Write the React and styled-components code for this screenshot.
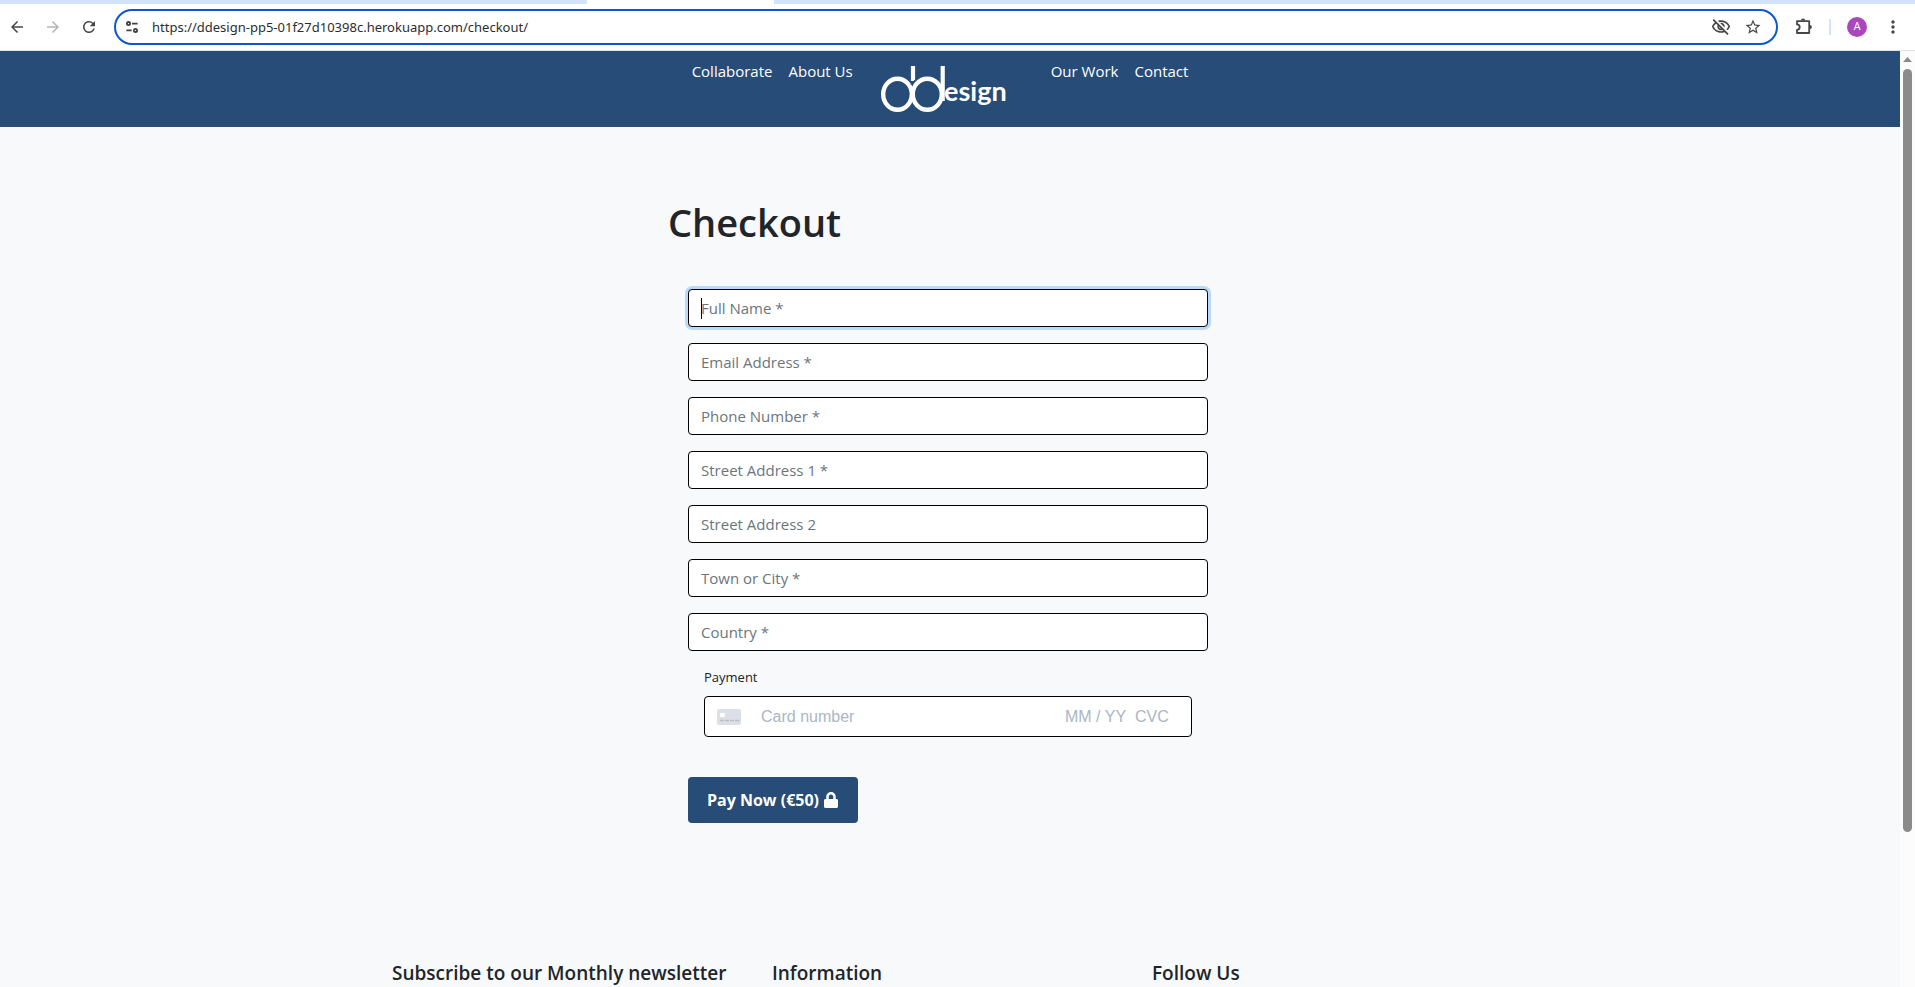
import React from "react";
import styled, { createGlobalStyle, css } from "styled-components";
import { MdArrowBack, MdArrowForward, MdRefresh, MdStarBorder, MdMoreVert, MdOutlineVisibilityOff } from "react-icons/md";
import { FaLock } from "react-icons/fa";

const navy = "#274c77";
const ink = "#212529";

const GlobalStyle = createGlobalStyle`
  *, *::before, *::after { box-sizing: border-box; }
  body {
    margin: 0;
    overflow: hidden;
    background: #f8f9fb;
    color: ${ink};
    font: 400 15px/24px "Open Sans", "Noto Sans", sans-serif;
  }
  svg { display: block; flex: none; }
`;

const Shell = styled.div`
  display: flex;
  flex-direction: column;
  height: 100vh;
`;

/* browser chrome */
const TabStrip = styled.div`
  display: flex;
  height: 4px;
  background: #d3e3fd;
`;
const ActiveTab = styled.div`
  width: 187px;
  margin-left: 587px;
  background: #fff;
`;
const Toolbar = styled.header`
  display: flex;
  align-items: center;
  height: 47px;
  padding: 0 13px 0 8px;
  background: #fff;
  border-bottom: 1px solid #dfe2e0;
`;
const ToolButton = styled.button`
  display: flex;
  align-items: center;
  justify-content: center;
  width: ${(p) => p.$w || 36}px;
  height: 28px;
  padding: 0;
  border: 0;
  background: none;
  color: ${(p) => (p.$muted ? "#b4b5b6" : "#474747")};
`;
const NavButtons = styled.div`
  display: flex;
  gap: 18px;
  margin-right: 16px;
`;
const AddressBar = styled.div`
  display: flex;
  flex: 1;
  align-items: center;
  height: 36px;
  padding: 0 7px;
  border: 2px solid #0b57d0;
  border-radius: 18px;
  background: #fff;
`;
const UrlInput = styled.input`
  flex: 1;
  min-width: 0;
  margin-left: 11px;
  padding: 0;
  border: 0;
  outline: 0;
  background: none;
  color: #2b2e31;
  font: 400 13px/20px "Noto Sans", "Open Sans", sans-serif;
`;
const Extras = styled.div`
  display: flex;
  align-items: center;
  margin-left: 16px;
`;
const Divider = styled.span`
  width: 2px;
  height: 16px;
  margin: 0 16px 0 15px;
  background: #d3e3fd;
`;
const Avatar = styled.button`
  width: 20px;
  height: 20px;
  margin-right: 17px;
  padding: 0;
  border: 0;
  border-radius: 50%;
  background: #ab47bc;
  color: #fff;
  font: 400 11px/20px Roboto, sans-serif;
`;

/* viewport */
const Viewport = styled.div`
  display: flex;
  flex: 1;
  min-height: 0;
`;
const Page = styled.div`
  flex: 1;
  overflow-y: auto;
  scrollbar-width: none;
`;
const ScrollTrack = styled.div`
  display: flex;
  flex-direction: column;
  align-items: center;
  width: 15px;
  padding-top: 6px;
  background: #fcfcfc;
`;
const ScrollThumb = styled.div`
  width: 9px;
  height: 82%;
  margin-top: 7px;
  border-radius: 5px;
  background: #8b8b8b;
`;

/* site header */
const SiteNav = styled.nav`
  display: flex;
  justify-content: center;
  height: 76px;
  padding: 8px 20px 0 0;
  background: ${navy};
`;
const LinkGroup = styled.div`
  display: flex;
  gap: 16px;
`;
const NavLink = styled.a`
  color: #fff;
  text-decoration: none;
`;
const LogoLink = styled.a`
  display: block;
  margin: 0 18px;
`;

/* checkout */
const Main = styled.main`
  max-width: 564px;
  margin: 0 auto;
  padding-top: 71px;
`;
const Title = styled.h1`
  margin: 0;
  font-size: 38px;
  font-weight: 600;
  line-height: 48px;
`;
const Form = styled.form`
  padding: 43px 24px 0 20px;
`;
const Field = styled.label`
  display: block;
  position: relative;
  margin-bottom: 16px;
  ${(p) => p.$active && css`
    &::after {
      content: "";
      position: absolute;
      top: 9px;
      left: 13px;
      width: 1px;
      height: 21px;
      background: #000;
    }
  `}
`;
const TextInput = styled.input`
  display: block;
  width: 100%;
  height: 38px;
  padding: 0 12px;
  border: 1px solid #000;
  border-radius: 4px;
  outline: 0;
  background: #fff;
  color: ${ink};
  font: inherit;
  box-shadow: ${(p) => (p.$active ? "0 0 0 3px #bad9fc" : "none")};
  &::placeholder { color: #6c757d; opacity: 1; }
`;
const Payment = styled.fieldset`
  margin: 0;
  padding: 0 16px;
  border: 0;
`;
const PaymentLabel = styled.legend`
  padding: 0;
  font-size: 13px;
  line-height: 21px;
`;
const CardBox = styled.div`
  display: flex;
  align-items: center;
  height: 41px;
  margin-top: 8px;
  padding: 0 12px;
  border: 1px solid #000;
  border-radius: 4px;
  background: #fff;
`;
const CardInput = styled.input`
  width: ${(p) => (p.$w ? `${p.$w}px` : "auto")};
  flex: ${(p) => (p.$w ? "none" : 1)};
  min-width: 0;
  margin-left: ${(p) => p.$gap || 0}px;
  padding: 0;
  border: 0;
  outline: 0;
  background: none;
  font: 400 16px/20px "Liberation Sans", Arial, sans-serif;
  &::placeholder { color: #aab7c4; opacity: 1; }
`;
const PayButton = styled.button`
  display: flex;
  align-items: center;
  justify-content: center;
  gap: 4px;
  width: 170px;
  height: 46px;
  margin-top: 40px;
  padding: 0;
  border: 0;
  border-radius: 4px;
  background: ${navy};
  color: #fff;
  font: 700 16px/24px "Open Sans", "Noto Sans", sans-serif;
`;

/* footer */
const Footer = styled.footer`
  display: grid;
  grid-template-columns: repeat(3, 1fr);
  max-width: 1140px;
  margin: 0 auto;
  padding: 138px 0 40px;
`;
const FooterTitle = styled.h5`
  margin: 0;
  padding: 0 12px;
  font-size: 19px;
  font-weight: 600;
  line-height: 24px;
`;

const TuneIcon = () => (
  <svg width="12" height="12" viewBox="0 0 12 12" fill="none" stroke="#404040" strokeWidth="1.8">
    <circle cx="2.5" cy="2.6" r="1.6" />
    <path d="M6 2.6H11.6M.4 9.4H5.6" />
    <circle cx="9.5" cy="9.4" r="1.6" />
  </svg>
);

const PuzzleIcon = () => (
  <svg width="20" height="20" viewBox="0 0 20 20">
    <path
      d="M3 4.2H15.2V16H3V12.8A2.7 2.7 0 0 0 3 7.4Z"
      fill="none" stroke="#474747" strokeWidth="1.8" strokeLinejoin="round"
    />
    <path d="M7 3.6a2.1 2.1 0 0 1 4.2 0ZM15.8 8a2.1 2.1 0 0 1 0 4.2Z" fill="#474747" />
  </svg>
);

const CardIcon = () => (
  <svg width="24" height="16" viewBox="0 0 24 16">
    <rect width="24" height="16" rx="2" fill="#dcdfe6" />
    <rect x="3" y="4" width="5" height="4" rx="1" fill="#fff" />
    <path d="M3 11.5H22" stroke="#b9bccb" strokeWidth="1.4" strokeDasharray="4 1" />
  </svg>
);

const Logo = () => (
  <svg width="162" height="60" viewBox="0 0 162 60" role="img" aria-label="DDesign">
    <g fill="none" stroke="#fff">
      <ellipse cx="26.5" cy="35.3" rx="14.3" ry="15.5" strokeWidth="4.4" />
      <ellipse cx="56.3" cy="35.3" rx="14.5" ry="15.5" strokeWidth="4.4" />
      <path d="M42 7V22" strokeWidth="4.2" />
      <path d="M71.7 7V42" strokeWidth="4.2" />
      <path d="M44 21L39.6 25.5" stroke={navy} strokeWidth="1" />
    </g>
    <text x="73" y="42" fill="#fff" fontFamily="Lato, sans-serif" fontSize="27" fontWeight="700">esign</text>
  </svg>
);

const fields = [
  "Full Name *",
  "Email Address *",
  "Phone Number *",
  "Street Address 1 *",
  "Street Address 2",
  "Town or City *",
  "Country *",
];

export default function App() {
  return (
    <Shell>
      <GlobalStyle />
      <TabStrip><ActiveTab /></TabStrip>
      <Toolbar>
        <NavButtons>
          <ToolButton $w={18} aria-label="Back"><MdArrowBack size={18} /></ToolButton>
          <ToolButton $w={18} $muted aria-label="Forward"><MdArrowForward size={18} /></ToolButton>
          <ToolButton $w={18} aria-label="Reload"><MdRefresh size={18} /></ToolButton>
        </NavButtons>
        <AddressBar>
          <ToolButton $w={18} aria-label="Site information"><TuneIcon /></ToolButton>
          <UrlInput aria-label="Address" defaultValue="https://ddesign-pp5-01f27d10398c.herokuapp.com/checkout/" />
          <ToolButton $w={32} aria-label="Tracking protection"><MdOutlineVisibilityOff size={20} /></ToolButton>
          <ToolButton $w={32} aria-label="Bookmark"><MdStarBorder size={18} /></ToolButton>
        </AddressBar>
        <Extras>
          <ToolButton $w={20} aria-label="Extensions"><PuzzleIcon /></ToolButton>
          <Divider />
          <Avatar aria-label="Profile">A</Avatar>
          <ToolButton $w={18} aria-label="Menu"><MdMoreVert size={20} /></ToolButton>
        </Extras>
      </Toolbar>
      <Viewport>
        <Page>
          <SiteNav>
            <LinkGroup>
              <NavLink href="#collaborate">Collaborate</NavLink>
              <NavLink href="#about">About Us</NavLink>
            </LinkGroup>
            <LogoLink href="#home"><Logo /></LogoLink>
            <LinkGroup>
              <NavLink href="#work">Our Work</NavLink>
              <NavLink href="#contact">Contact</NavLink>
            </LinkGroup>
          </SiteNav>
          <Main>
            <Title>Checkout</Title>
            <Form>
              {fields.map((name, i) => (
                <Field key={name} $active={i === 0}>
                  <TextInput placeholder={name} aria-label={name} $active={i === 0} />
                </Field>
              ))}
              <Payment>
                <PaymentLabel>Payment</PaymentLabel>
                <CardBox>
                  <CardIcon />
                  <CardInput $gap={20} placeholder="Card number" aria-label="Card number" />
                  <CardInput $w={61} placeholder="MM / YY" aria-label="Expiry date" />
                  <CardInput $w={44} $gap={9} placeholder="CVC" aria-label="Security code" />
                </CardBox>
              </Payment>
              <PayButton type="button">Pay Now (€50)<FaLock size={16} /></PayButton>
            </Form>
          </Main>
          <Footer>
            <FooterTitle>Subscribe to our Monthly newsletter</FooterTitle>
            <FooterTitle>Information</FooterTitle>
            <FooterTitle>Follow Us</FooterTitle>
          </Footer>
        </Page>
        <ScrollTrack>
          <svg width="9" height="5" viewBox="0 0 9 5"><path d="M4.5 0L9 5H0Z" fill="#8b8b8b" /></svg>
          <ScrollThumb />
        </ScrollTrack>
      </Viewport>
    </Shell>
  );
}
